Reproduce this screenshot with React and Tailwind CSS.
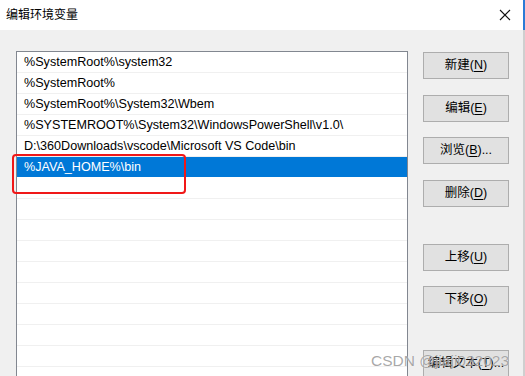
import React from "react";

const rows = [
  "%SystemRoot%\\system32",
  "%SystemRoot%",
  "%SystemRoot%\\System32\\Wbem",
  "%SYSTEMROOT%\\System32\\WindowsPowerShell\\v1.0\\",
  "D:\\360Downloads\\vscode\\Microsoft VS Code\\bin",
  "%JAVA_HOME%\\bin",
  "", "", "", "", "", "", "", "", "", "",
];

function Btn({ label, k, tail = "", mt }) {
  return (
    <div
      className={`${mt} w-[86px] h-[27px] shrink-0 flex items-center justify-center bg-[#e1e1e1] border border-[#adadad] text-[12.5px] text-black`}
    >
      <span>
        {label}(<span className="underline underline-offset-2">{k}</span>){tail}
      </span>
    </div>
  );
}

export default function App() {
  return (
    <div
      className="relative w-[525px] h-[376px] overflow-hidden bg-[#f0f0f0] flex flex-col"
      style={{ fontFamily: '"Liberation Sans", "Noto Sans CJK SC", sans-serif' }}
    >
      <div className="h-[30px] shrink-0 bg-white flex items-center justify-between pl-[6px] pr-[12px] border-r-2 border-[#2b7bd6]">
        <span className="text-[12px] text-black">编辑环境变量</span>
        <svg width="12" height="12" viewBox="0 0 12 12">
          <path d="M1 1 L11 11 M11 1 L1 11" stroke="#111" strokeWidth="1.1" fill="none" />
        </svg>
      </div>
      <div className="flex-1 flex pt-[21px] pl-[16px] border-r-2 border-[#cfcfcf]">
        <div className="w-[392px] shrink-0 bg-white border-l border-t border-r border-[#828790] flex flex-col">
          {rows.map((r, i) => (
            <div
              key={i}
              className={`h-[21px] shrink-0 flex items-center pl-[7px] text-[12.6px] border-b whitespace-nowrap ${
                i === 5 ? "bg-[#0078d7] text-white border-white" : "text-black border-[#f0f0f0]"
              }`}
            >
              {r}
            </div>
          ))}
        </div>
        <div className="flex flex-col ml-[15px]">
          <Btn label="新建" k="N" mt="mt-[1px]" />
          <Btn label="编辑" k="E" mt="mt-[16px]" />
          <Btn label="浏览" k="B" tail="..." mt="mt-[15px]" />
          <Btn label="删除" k="D" mt="mt-[16px]" />
          <Btn label="上移" k="U" mt="mt-[37px]" />
          <Btn label="下移" k="O" mt="mt-[15px]" />
          <Btn label="编辑文本" k="T" tail="..." mt="mt-[37px]" />
        </div>
      </div>
      <div className="absolute left-[12px] top-[154px] w-[174px] h-[40px] border-2 border-[#f01818] rounded-[4px]" />
      <div
        className="absolute left-[371px] top-[349px] text-[15.5px] text-[#8c8c8c]/75"
        style={{ textShadow: "0 0 1px rgba(255,255,255,0.8)" }}
      >
        CSDN @jiaji032023
      </div>
    </div>
  );
}
